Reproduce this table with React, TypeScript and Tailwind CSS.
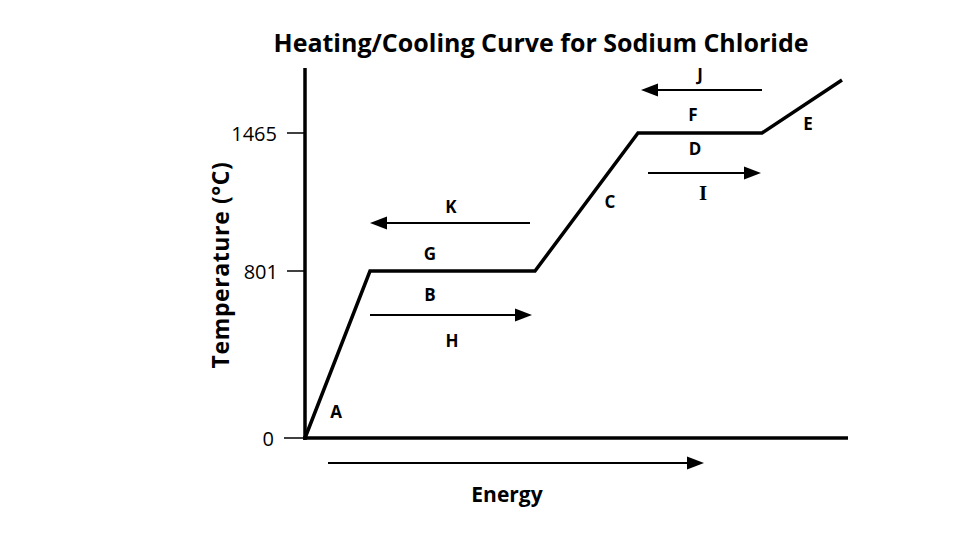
const font = '"Open Sans", "Liberation Sans", sans-serif';

function Arrow({ x1, x2, y }: { x1: number; x2: number; y: number }) {
  // arrow head sits on x2
  const dir = x2 > x1 ? 1 : -1;
  const tip = x2;
  const base = x2 - dir * 17;
  return (
    <g>
      <line x1={x1} y1={y} x2={base} y2={y} stroke="#000" strokeWidth={2.2} />
      <polygon points={`${tip},${y} ${base},${y - 6.5} ${base},${y + 6.5}`} fill="#000" />
    </g>
  );
}

function Label({ x, y, children, serif }: { x: number; y: number; children: string; serif?: boolean }) {
  return (
    <text
      x={x}
      y={y}
      textAnchor="middle"
      dominantBaseline="central"
      fontSize={serif ? 21 : 17}
      fontWeight={700}
      fontFamily={serif ? '"Liberation Serif", serif' : font}
      fill="#000"
    >
      {children}
    </text>
  );
}

export default function App() {
  return (
    <div className="w-[960px] h-[540px] bg-white flex flex-col overflow-hidden">
      <div className="h-[64px] pt-[28px] pl-[122px] text-center">
        <h1 className="text-[25px] leading-[28px] font-bold text-black" style={{ fontFamily: font }}>
          Heating/Cooling Curve for Sodium Chloride
        </h1>
      </div>
      <svg width={960} height={476} viewBox="0 64 960 476" className="block">
        {/* axes */}
        <line x1={305} y1={68} x2={305} y2={440} stroke="#000" strokeWidth={3.5} />
        <line x1={303} y1={438} x2={848} y2={438} stroke="#000" strokeWidth={3.5} />

        {/* ticks */}
        <line x1={287} y1={133} x2={305} y2={133} stroke="#000" strokeWidth={1.5} />
        <line x1={287} y1={271} x2={305} y2={271} stroke="#000" strokeWidth={1.5} />
        <line x1={284} y1={438} x2={305} y2={438} stroke="#000" strokeWidth={1.5} />
        <text x={277} y={133} textAnchor="end" dominantBaseline="central" fontSize={20} fontFamily={font}>1465</text>
        <text x={278} y={271} textAnchor="end" dominantBaseline="central" fontSize={20} fontFamily={font}>801</text>
        <text x={274} y={438} textAnchor="end" dominantBaseline="central" fontSize={20} fontFamily={font}>0</text>

        {/* y axis title */}
        <text
          x={220}
          y={265}
          textAnchor="middle"
          dominantBaseline="central"
          fontSize={23}
          letterSpacing={0.6}
          fontWeight={700}
          fontFamily={font}
          transform="rotate(-90 220 265)"
        >
          Temperature (°C)
        </text>

        {/* heating curve */}
        <polyline
          points="305,438 370,271 535,271 638,133 762,133 842,80"
          fill="none"
          stroke="#000"
          strokeWidth={3.5}
          strokeLinejoin="miter"
        />

        {/* phase arrows */}
        <Arrow x1={530} x2={370} y={223} />
        <Arrow x1={370} x2={532} y={315} />
        <Arrow x1={762} x2={641} y={90} />
        <Arrow x1={648} x2={761} y={173} />
        <Arrow x1={328} x2={704} y={463} />

        {/* segment labels */}
        <Label x={451} y={206}>K</Label>
        <Label x={430} y={253}>G</Label>
        <Label x={430} y={294}>B</Label>
        <Label x={452} y={340}>H</Label>
        <Label x={336} y={411}>A</Label>
        <Label x={610} y={201}>C</Label>
        <Label x={700} y={74}>J</Label>
        <Label x={693} y={114}>F</Label>
        <Label x={695} y={148}>D</Label>
        <Label x={703} y={193} serif>I</Label>
        <Label x={808} y={123}>E</Label>

        <text x={507} y={494} textAnchor="middle" dominantBaseline="central" fontSize={21} fontWeight={700} fontFamily={font}>
          Energy
        </text>
      </svg>
    </div>
  );
}
